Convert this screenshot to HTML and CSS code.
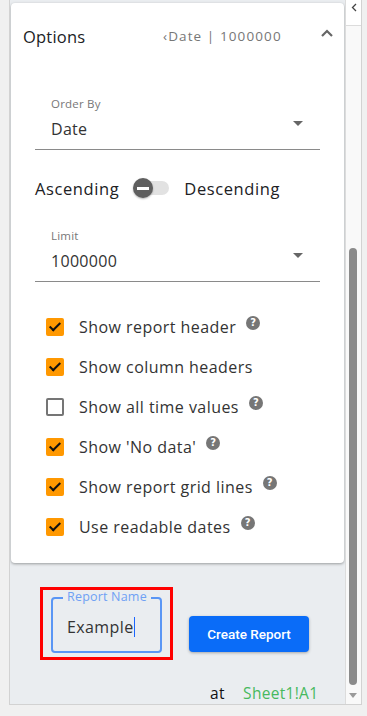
FILE: index.html
```html
<!DOCTYPE html>
<html lang="en">
<head>
    <title>Report Options</title>
    <link rel="stylesheet" href="styles.css">
</head>
<body>
    <div class="panel">
        <div class="content">
            <div class="card">
                <div class="card-header">
                    <span class="card-title">Options</span>
                    <span class="summary">&lsaquo;Date | 1000000</span>
                    <svg class="chevron" width="12" height="8" viewBox="0 0 12 8">
                        <path d="M1 7 L6 2 L11 7" fill="none" stroke="#666" stroke-width="2.2"/>
                    </svg>
                </div>

                <div class="card-body">
                    <div class="select">
                        <div class="select-label">Order By</div>
                        <div class="select-value">Date</div>
                        <span class="caret"></span>
                    </div>

                    <div class="sort-row">
                        <span>Ascending</span>
                        <span class="switch">
                            <span class="switch-track"></span>
                            <span class="switch-thumb"></span>
                        </span>
                        <span>Descending</span>
                    </div>

                    <div class="select">
                        <div class="select-label">Limit</div>
                        <div class="select-value">1000000</div>
                        <span class="caret"></span>
                    </div>

                    <ul class="checks">
                        <li><span class="box on"></span>Show report header<span class="help">?</span></li>
                        <li><span class="box on"></span>Show column headers</li>
                        <li><span class="box"></span>Show all time values<span class="help">?</span></li>
                        <li><span class="box on"></span>Show 'No data'<span class="help">?</span></li>
                        <li><span class="box on"></span>Show report grid lines<span class="help">?</span></li>
                        <li><span class="box on"></span>Use readable dates<span class="help">?</span></li>
                    </ul>
                </div>
            </div>

            <div class="actions">
                <div class="highlight">
                    <div class="name-field">
                        <span class="name-label">Report Name</span>
                        <span class="name-value">Example<span class="cursor"></span></span>
                    </div>
                </div>
                <button class="create-button">Create Report</button>
            </div>

            <div class="target">
                <span class="at">at</span>
                <span class="cell">Sheet1!A1</span>
            </div>
        </div>

        <div class="scrollbar">
            <div class="collapse">
                <svg width="6" height="9" viewBox="0 0 6 9">
                    <path d="M5 1 L1.5 4.5 L5 8" fill="none" stroke="#444" stroke-width="1.3"/>
                </svg>
            </div>
            <div class="thumb"></div>
            <span class="down"></span>
        </div>
    </div>
</body>
</html>
```

FILE: styles.css
```css
body {
    margin: 0;
    background-color: #f0f0f0;
    font-family: "Open Sans", sans-serif;
    color: #333;
}

.panel {
    margin-left: 9px;
    width: 351px;
    height: 704px;
    border: 1px solid #d2d2d2;
    border-top: none;
    background-color: #eaedf0;
    display: flex;
}

.content {
    flex: 1;
    padding: 3px 1px 0 1px;
    overflow: hidden;
}

.card {
    background-color: #fff;
    border-radius: 4px;
    box-shadow: 0 1px 3px rgba(0, 0, 0, 0.35);
    height: 560px;
}

.card-header {
    display: flex;
    align-items: center;
    height: 66px;
    padding: 0 11px 0 12px;
}

.card-title {
    font-size: 16.5px;
    letter-spacing: 0.2px;
    color: #202124;
    width: 140px;
}

.summary {
    font-size: 13.5px;
    letter-spacing: 1.1px;
    color: #777;
    flex: 1;
}

.chevron {
    margin-bottom: 6px;
}

.card-body {
    padding: 27px 24px 0 24px;
}

.select {
    position: relative;
    border-bottom: 1px solid #8a8a8a;
    padding: 0 16px 9px 16px;
}

.select-label {
    font-size: 11.5px;
    letter-spacing: 0.2px;
    color: #777;
    line-height: 16px;
}

.select-value {
    font-size: 16px;
    letter-spacing: 0.3px;
    color: #333;
    line-height: 22px;
    margin-top: 6px;
}

.caret {
    position: absolute;
    right: 17px;
    top: 25px;
    border-left: 5px solid transparent;
    border-right: 5px solid transparent;
    border-top: 5px solid #666;
}

.sort-row {
    display: flex;
    align-items: center;
    height: 24px;
    margin: 26px 0 28px 0;
    font-size: 16.5px;
    letter-spacing: 0.6px;
    color: #202124;
}

.switch {
    position: relative;
    width: 36px;
    height: 22px;
    margin: 0 15px 0 14px;
}

.switch-track {
    position: absolute;
    left: 1px;
    right: 0;
    top: 4px;
    height: 14px;
    border-radius: 7px;
    background-color: #e2e2e2;
}

.switch-thumb {
    position: absolute;
    left: 0;
    top: 1px;
    width: 20px;
    height: 20px;
    border-radius: 50%;
    background-color: #5f5f5f;
    box-shadow: 0 1px 2px rgba(0, 0, 0, 0.3);
}

.switch-thumb::after {
    content: "";
    position: absolute;
    left: 4px;
    right: 4px;
    top: 9px;
    height: 2.5px;
    background-color: #fff;
}

.checks {
    list-style-type: none;
    padding: 0 0 0 11px;
    margin: 25px 0 0 0;
}

.checks li {
    display: flex;
    align-items: center;
    height: 40px;
    font-size: 16px;
    letter-spacing: 0.45px;
    color: #333;
}

.box {
    width: 14px;
    height: 14px;
    border: 2px solid #757575;
    border-radius: 2px;
    margin-right: 15px;
    position: relative;
}

.box.on {
    border-color: #ff9800;
    background-color: #ff9800;
}

.box.on::after {
    content: "";
    position: absolute;
    left: 4px;
    top: 0;
    width: 4px;
    height: 9px;
    border-right: 2px solid #111;
    border-bottom: 2px solid #111;
    transform: rotate(45deg);
}

.help {
    width: 14px;
    height: 14px;
    border-radius: 50%;
    background-color: #767676;
    color: #fff;
    font-family: "DejaVu Sans", sans-serif;
    font-size: 10px;
    font-weight: bold;
    letter-spacing: 0;
    line-height: 14px;
    text-align: center;
    margin: 0 0 8px 10px;
}

.actions {
    display: flex;
    align-items: flex-start;
    padding: 24px 0 0 29px;
}

.highlight {
    border: 3px solid #ff0000;
    padding: 7px 8px 4px 8px;
}

.name-field {
    position: relative;
    width: 107px;
    height: 52px;
    border: 2px solid #5a96f5;
    border-radius: 4px;
}

.name-label {
    position: absolute;
    left: 10px;
    top: -9px;
    padding: 0 4px 0 4px;
    background-color: #eaedf0;
    font-size: 12.5px;
    letter-spacing: 0.2px;
    line-height: 14px;
    color: #6fa1f4;
}

.name-value {
    display: flex;
    align-items: center;
    padding: 17px 0 0 14px;
    font-size: 16px;
    letter-spacing: 0.4px;
    color: #333;
}

.cursor {
    width: 1px;
    height: 20px;
    background-color: #1a66ff;
}

.create-button {
    margin: 29px 0 0 16px;
    width: 120px;
    height: 36px;
    border: none;
    border-radius: 4px;
    background-color: #0a6cf8;
    color: #fff;
    font-family: Roboto, sans-serif;
    font-weight: 500;
    font-size: 13.5px;
    box-shadow: 0 1px 3px rgba(0, 0, 0, 0.3);
}

.target {
    padding: 22px 0 0 199px;
    font-size: 15.5px;
    letter-spacing: 0.3px;
    line-height: 22px;
}

.at {
    color: #111;
    margin-right: 14px;
}

.cell {
    color: #47b95e;
}

.scrollbar {
    width: 15px;
    border-left: 1px solid #dcdcdc;
    background-color: #f9f9f9;
    position: relative;
}

.collapse {
    height: 26px;
    border-bottom: 1px solid #dcdcdc;
    background-color: #fff;
    display: flex;
    justify-content: center;
    padding-top: 3px;
    box-sizing: border-box;
}

.thumb {
    margin: 222px 0 0 3px;
    width: 8px;
    height: 437px;
    border-radius: 4px;
    background-color: #8b8b8b;
}

.down {
    position: absolute;
    left: 3px;
    bottom: 6px;
    border-left: 4px solid transparent;
    border-right: 4px solid transparent;
    border-top: 5px solid #9a9a9a;
}
```
